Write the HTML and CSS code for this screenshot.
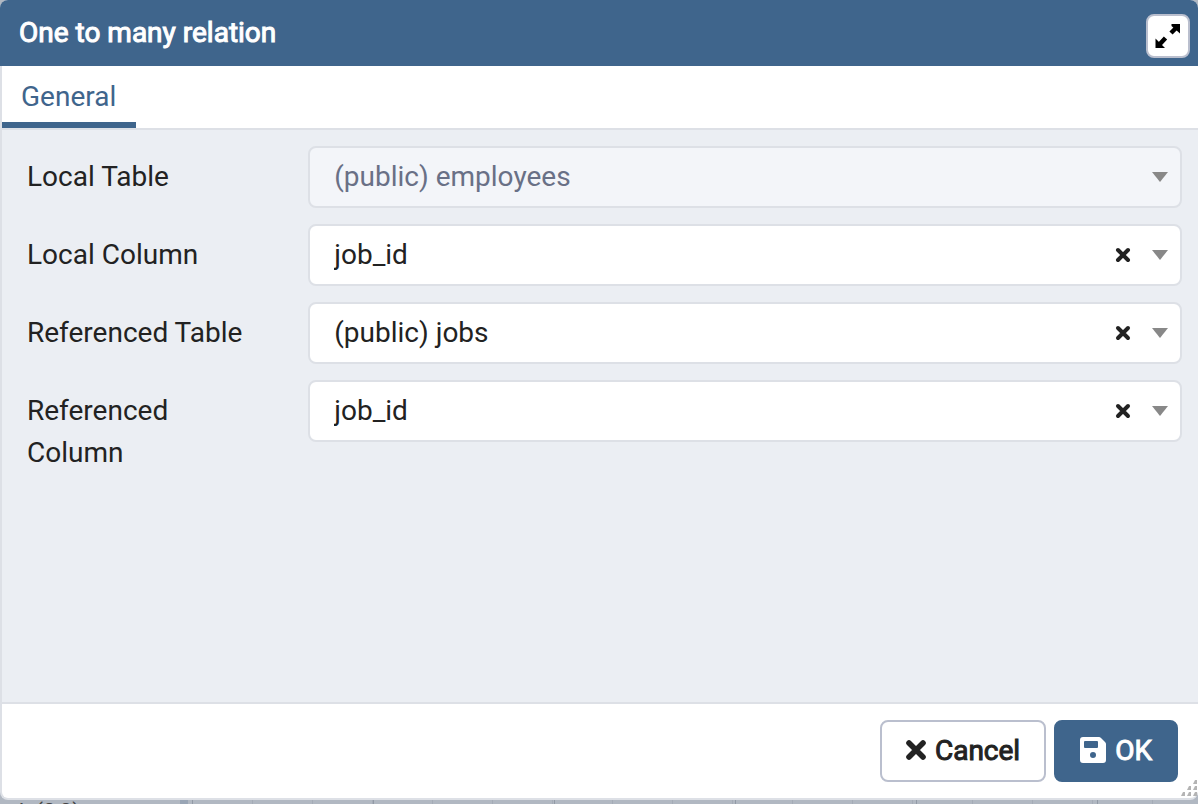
FILE: index.html
```html
<!DOCTYPE html>
<html lang="en">
<head>
<meta charset="utf-8">
<title>One to many relation</title>
<link rel="stylesheet" href="styles.css">
</head>
<body>
<main class="dialog" role="dialog" aria-labelledby="dialog-title">
  <header class="dialog-header">
    <h1 class="dialog-title" id="dialog-title">One to many relation</h1>
    <button class="maximize" type="button" aria-label="Maximize">
      <svg width="26" height="26" viewBox="0 0 26 26" fill="#000" stroke="#000" aria-hidden="true">
        <path stroke="none" d="M16.500 1H25V10.500L16.500 3z"/>
        <path stroke="none" d="M.500 15.500V25H10L.500 15.500z"/>
        <path stroke-width="4.500" d="M22 4l-6 6M4 22l6.500-7"/>
      </svg>
    </button>
  </header>
  <nav class="tabs"><a class="tab" href="#general">General</a></nav>
  <form class="form" id="general">
    <div class="row">
      <label class="label" for="local-table">Local Table</label>
      <div class="field">
        <select class="select" id="local-table" disabled><option>(public) employees</option></select>
        <svg class="caret" width="16" height="10" viewBox="0 0 16 10" aria-hidden="true"><path d="M0 0h16L8 10z"/></svg>
      </div>
    </div>
    <div class="row">
      <label class="label" for="local-column">Local Column</label>
      <div class="field">
        <select class="select" id="local-column"><option>job_id</option></select>
        <button class="clear" type="button" aria-label="Clear local column"><svg width="14" height="14" viewBox="0 0 14 14" aria-hidden="true"><path d="M2 2l10 10M12 2L2 12"/></svg></button>
        <svg class="caret" width="16" height="10" viewBox="0 0 16 10" aria-hidden="true"><path d="M0 0h16L8 10z"/></svg>
      </div>
    </div>
    <div class="row">
      <label class="label" for="ref-table">Referenced Table</label>
      <div class="field">
        <select class="select" id="ref-table"><option>(public) jobs</option></select>
        <button class="clear" type="button" aria-label="Clear referenced table"><svg width="14" height="14" viewBox="0 0 14 14" aria-hidden="true"><path d="M2 2l10 10M12 2L2 12"/></svg></button>
        <svg class="caret" width="16" height="10" viewBox="0 0 16 10" aria-hidden="true"><path d="M0 0h16L8 10z"/></svg>
      </div>
    </div>
    <div class="row">
      <label class="label" for="ref-column">Referenced Column</label>
      <div class="field">
        <select class="select" id="ref-column"><option>job_id</option></select>
        <button class="clear" type="button" aria-label="Clear referenced column"><svg width="14" height="14" viewBox="0 0 14 14" aria-hidden="true"><path d="M2 2l10 10M12 2L2 12"/></svg></button>
        <svg class="caret" width="16" height="10" viewBox="0 0 16 10" aria-hidden="true"><path d="M0 0h16L8 10z"/></svg>
      </div>
    </div>
  </form>
  <footer class="dialog-footer">
    <button class="button" type="button">
      <svg width="20" height="20" viewBox="0 0 20 20" fill="none" stroke="#222" stroke-width="5.6" stroke-linecap="round" aria-hidden="true"><path d="M3 3l14 14M17 3L3 17"/></svg>
      Cancel
    </button>
    <button class="button button-primary" type="button">
      <svg width="26" height="26" viewBox="0 0 26 26" aria-hidden="true"><path fill="#fff" fill-rule="evenodd" d="M3 0h16q1 0 2 1l4 4q1 1 1 2v16q0 3-3 3H3q-3 0-3-3V3Q0 0 3 0zM5 4q-1 0-1 1v5q0 1 1 1h12q1 0 1-1V5q0-1-1-1zM13 15a3 3 0 1 0 0 6 3 3 0 0 0 0-6z"/></svg>
      OK
    </button>
    <svg class="grip" width="18" height="18" viewBox="0 0 18 18" fill="#b4b4b4" aria-hidden="true"><path d="M15 0h2v4h-4zM9 6h2v4H7zM15 6h2v4h-4zM3 12h2v4H1zM9 12h2v4H7zM15 12h2v4h-4z"/></svg>
  </footer>
</main>
<div class="canvas"><span class="canvas-label">k (0,0)</span><span class="canvas-grid"></span></div>
</body>
</html>
```
FILE: styles.css
```css
* { box-sizing: border-box; }
body {
  margin: 0;
  height: 100vh;
  display: flex;
  flex-direction: column;
  overflow: hidden;
  background: #b1b8c2;
  color: #222;
  font: 28px/42px Roboto, "Liberation Sans", sans-serif;
}
.dialog {
  flex: 1;
  display: flex;
  flex-direction: column;
  border: solid #dde0e6;
  border-width: 0 0 2px 2px;
  border-radius: 8px;
  background: #fff;
}
.dialog-header {
  display: flex;
  justify-content: space-between;
  align-items: flex-start;
  margin-left: -2px;
  padding: 12px 8px 8px 19px;
  height: 66px;
  border-radius: 8px 8px 0 0;
  background: #3f658c;
  color: #fff;
}
.dialog-title {
  margin: 0;
  font-size: 28px;
  font-weight: 400;
  line-height: 42px;
  -webkit-text-stroke: 1px currentColor;
}
.maximize {
  display: grid;
  place-items: center;
  width: 44px;
  height: 44px;
  margin-top: 2px;
  padding: 0;
  border: 2px solid #babfce;
  border-radius: 8px;
  background: #fff;
}
.tabs {
  display: flex;
  height: 64px;
  border-bottom: 2px solid #dde0e6;
}
.tab {
  padding: 10px 20px 10px 19px;
  border-bottom: 6px solid #3f658c;
  color: #3f658c;
  text-decoration: none;
}
.form {
  flex: 1;
  display: flex;
  flex-direction: column;
  gap: 16px;
  padding: 16px 16px 16px 15px;
  background: #ebeef3;
}
.row {
  display: grid;
  grid-template-columns: 1fr 3fr;
  align-items: start;
}
.label { padding: 10px 48px 0 10px; }
.field { position: relative; }
.select {
  display: block;
  width: 100%;
  height: 62px;
  padding: 0 88px 0 24px;
  appearance: none;
  border: 2px solid #dde0e6;
  border-radius: 8px;
  background: #fff;
  color: #222;
  font: inherit;
}
.select:disabled {
  background: #f3f5f9;
  color: #697086;
  opacity: 1;
}
.caret {
  position: absolute;
  top: 26px;
  right: 14px;
  fill: #888;
  pointer-events: none;
}
.clear {
  position: absolute;
  top: 17px;
  right: 45px;
  display: grid;
  place-items: center;
  width: 28px;
  height: 28px;
  padding: 0;
  border: 0;
  background: none;
}
.clear svg { overflow: visible; }
.clear path { stroke: #222; stroke-width: 4; stroke-linecap: round; }
.dialog-footer {
  position: relative;
  display: flex;
  justify-content: flex-end;
  gap: 8px;
  padding: 16px 20px;
  border-top: 2px solid #dde0e6;
}
.button {
  display: flex;
  align-items: center;
  gap: 9px;
  height: 62px;
  padding: 0 24px 0 24px;
  border: 2px solid #babfce;
  border-radius: 8px;
  background: #fff;
  color: #222;
  font: 400 28px/42px Roboto, "Liberation Sans", sans-serif;
  -webkit-text-stroke: 1px currentColor;
}
.button svg { margin-bottom: 2px; }
.button-primary {
  border-color: #3f658c;
  background: #3f658c;
  color: #fff;
}
.grip { position: absolute; right: 0; bottom: 0; }
.canvas {
  display: flex;
  height: 4px;
  overflow: hidden;
}
.canvas-label {
  width: 180px;
  padding-left: 19px;
  color: #444;
  font-size: 22px;
  line-height: 24px;
}
.canvas-grid {
  flex: 1;
  border-left: 8px solid #99a5b5;
  background:
    repeating-linear-gradient(90deg, transparent 0 4px, #929aa6 4px 5px, transparent 5px 181px),
    repeating-linear-gradient(90deg, transparent 0 4px, #a5acb7 4px 5px, transparent 5px 60px);
}
```
